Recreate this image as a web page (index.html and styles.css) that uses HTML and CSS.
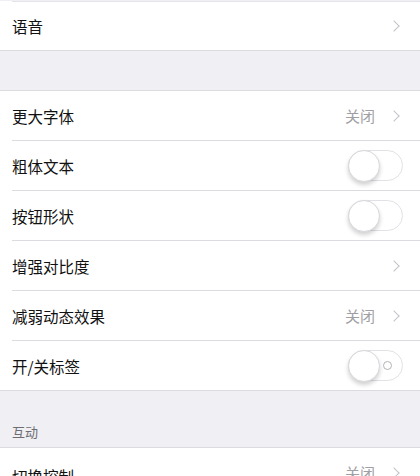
FILE: index.html
```html
<!DOCTYPE html>
<html lang="zh-CN">
<head>
    <meta charset="UTF-8">
    <meta name="viewport" content="width=device-width, initial-scale=1.0">
    <title>辅助功能</title>
    <link rel="stylesheet" href="styles.css">
</head>
<body>
    <div class="screen">
        <div class="group group-top">
            <div class="row">
                <span class="label">语音</span>
                <span class="chevron"></span>
            </div>
        </div>

        <div class="gap"></div>

        <div class="group">
            <div class="row">
                <span class="label">更大字体</span>
                <span class="value">关闭</span>
                <span class="chevron"></span>
            </div>
            <div class="row">
                <span class="label">粗体文本</span>
                <span class="switch"></span>
            </div>
            <div class="row">
                <span class="label">按钮形状</span>
                <span class="switch"></span>
            </div>
            <div class="row">
                <span class="label">增强对比度</span>
                <span class="chevron"></span>
            </div>
            <div class="row">
                <span class="label">减弱动态效果</span>
                <span class="value">关闭</span>
                <span class="chevron"></span>
            </div>
            <div class="row">
                <span class="label">开/关标签</span>
                <span class="switch labels"></span>
            </div>
        </div>

        <div class="section-title">互动</div>

        <div class="group">
            <div class="row">
                <span class="label mark">切换控制</span>
                <span class="value">关闭</span>
                <span class="chevron"></span>
            </div>
        </div>
    </div>
</body>
</html>
```

FILE: styles.css
```css
body {
    margin: 0;
    background-color: #efeff4;
    font-family: "Noto Sans CJK SC", "Noto Sans", sans-serif;
    color: #111;
}

.screen {
    width: 420px;
    height: 476px;
    overflow: hidden;
}

.group {
    background-color: #fff;
    border-top: 1px solid #dcdce0;
    border-bottom: 1px solid #dcdce0;
    padding-left: 12px;
}

.group-top {
    margin-top: 1px;
    border-top: none;
}

.row {
    display: flex;
    align-items: center;
    height: 49px;
    padding-right: 20px;
    border-top: 1px solid #dcdce0;
}

.group .row:first-child {
    border-top: none;
}

.group-top .row:first-child {
    height: 48px;
    border-top: 1px solid #e4e4e8;
}

.label {
    flex: 1;
    font-size: 15.5px;
}

.value {
    font-size: 15px;
    color: #a0a0a4;
    margin-right: 15px;
}

.chevron {
    width: 7px;
    height: 7px;
    border-top: 1.5px solid #c4c4c8;
    border-right: 1.5px solid #c4c4c8;
    transform: rotate(45deg);
    margin-right: 2px;
}

.switch {
    position: relative;
    width: 53px;
    height: 29px;
    border: 1px solid #e2e2e6;
    border-radius: 16px;
    background-color: #fff;
    margin-right: -3px;
}

.switch::before {
    content: "";
    position: absolute;
    left: -1px;
    top: -1px;
    width: 30px;
    height: 30px;
    border-radius: 50%;
    background-color: #fff;
    border: 0.5px solid #d8d8dc;
    box-shadow: 0 3px 4px rgba(0, 0, 0, 0.18);
}

.switch.labels::after {
    content: "";
    position: absolute;
    right: 10px;
    top: 10px;
    width: 7px;
    height: 7px;
    border: 1.3px solid #b4b4b8;
    border-radius: 50%;
}

.gap {
    height: 39px;
}

.section-title {
    height: 56px;
    box-sizing: border-box;
    padding: 31px 0 0 12px;
    font-size: 13px;
    color: #6d6d72;
}

.mark {
    position: relative;
    top: 3px;
}

.mark::after {
    content: "";
    position: absolute;
    left: 68px;
    top: 20px;
    width: 52px;
    height: 8px;
    border-top: 2px solid #c0303f;
    border-radius: 50% 50% 0 0;
}
```
